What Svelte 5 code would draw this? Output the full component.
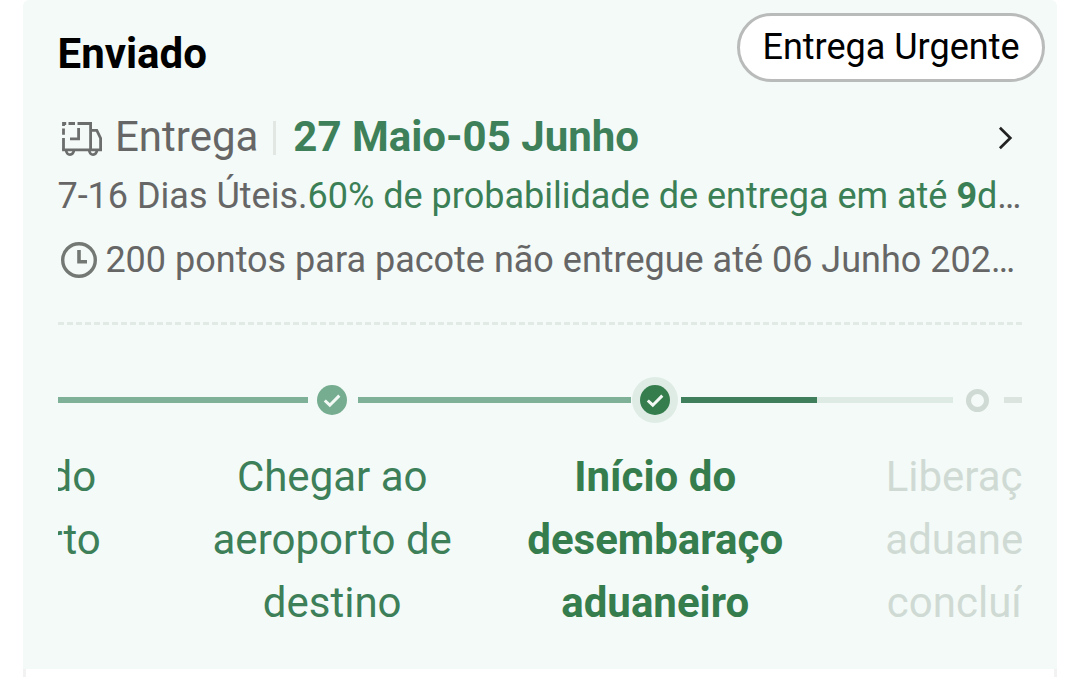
<script>
  const steps = [
    { lines: ['Recebido', 'aeroporto'], state: 'done' },
    { lines: ['Chegar ao', 'aeroporto de', 'destino'], state: 'done' },
    { lines: ['Início do', 'desembaraço', 'aduaneiro'], state: 'current' },
    { lines: ['Liberação', 'aduaneira', 'concluída'], state: 'pending' }
  ];
</script>

{#snippet check()}
  <svg class="check" width="30" height="30" viewBox="0 0 30 30">
    <path d="M7.8 15.5 12.8 20.2 22.3 10.6" fill="none" stroke="#f3faf6" stroke-width="3" />
  </svg>
{/snippet}

<main class="page">
  <section class="card">
    <header class="head">
      <h1>Enviado</h1>
      <button class="pill">Entrega Urgente</button>
    </header>

    <div class="delivery">
      <svg class="truck" width="44" height="38" viewBox="60 120 44 38" fill="none" stroke="#6b6e6c" stroke-width="2.8">
        <path d="M63.5 126V123.5H66.2M68.5 123.5H75M77.5 123.5H90.6V149.8M63.5 128.5V134.8M63.5 138V149.8M100.6 149.8V138.2L96.8 130.4H90.6" />
        <path d="M78.6 128V138.8H70" />
        <path d="M62.1 149.8H102" />
        <path d="M66.2 150.2a3.8 4.5 0 0 0 7.6 0M89.3 150.2a3.8 4.5 0 0 0 7.6 0" />
      </svg>
      <span class="label">Entrega</span>
      <span class="divider"></span>
      <strong>27 Maio-05 Junho</strong>
      <svg class="chevron" width="18" height="26" viewBox="0 0 18 26">
        <path d="M2.9 2.7 13.3 13 2.9 23.3" fill="none" stroke="#222" stroke-width="2.7" />
      </svg>
    </div>

    <p class="estimate">7-16 Dias Úteis.<span>60% de probabilidade de entrega em até <b>9</b>d</span>…</p>

    <div class="points">
      <svg width="38" height="38" viewBox="0 0 38 38" fill="none" stroke="#747875">
        <circle cx="19" cy="19" r="16.3" stroke-width="3.4" />
        <path d="M19 9V20.8H27" stroke-width="3.6" />
      </svg>
      <p>200 pontos para pacote não entregue até 06 Junho 202…</p>
    </div>

    <div class="dashes"></div>

    <div class="track">
      <i class="bar first"></i>
      <span class="node">{@render check()}</span>
      <i class="bar second"></i>
      <span class="node active"><span class="halo">{@render check()}</span></span>
      <i class="bar strong"></i>
      <i class="bar faint"></i>
      <span class="node open"><span class="ring"></span></span>
      <i class="bar tail"></i>
    </div>

    <div class="viewport">
      <div class="steps">
        {#each steps as step}
          <div class="step {step.state}">
            {#each step.lines as line}<div>{line}</div>{/each}
          </div>
        {/each}
      </div>
    </div>
  </section>
  <section class="below"></section>
</main>

<style>
  :global(body) { margin: 0; background: #fff; }
  .page {
    width: 1080px;
    height: 677px;
    overflow: hidden;
    box-sizing: border-box;
    padding: 0 23px;
    background: #fff;
    font-family: Roboto, sans-serif;
    color: #666;
  }
  .card {
    height: 669px;
    box-sizing: border-box;
    padding: 0 35px;
    background: #f4faf7;
    border-radius: 6px 6px 0 0;
  }
  .below {
    height: 8px;
    box-sizing: border-box;
    border: solid #f2f2f2;
    border-width: 0 3px;
  }
  h1, p { margin: 0; }
  .head {
    height: 112px;
    display: flex;
    justify-content: space-between;
    align-items: flex-start;
    margin-right: -23px;
  }
  h1 {
    padding-top: 29px;
    margin-left: -0.5px;
    font-size: 42px;
    line-height: 50px;
    font-weight: 700;
    color: #000;
  }
  .pill {
    width: 308px;
    height: 69px;
    margin: 13px 0 0;
    padding: 0 0 2px;
    border: 3px solid #b9bbba;
    border-radius: 35px;
    background: #fff;
    color: #000;
    font: 400 36px/42px Roboto, sans-serif;
    white-space: nowrap;
  }
  .delivery {
    height: 50px;
    display: flex;
    align-items: center;
    font-size: 42px;
    line-height: 50px;
  }
  .truck { margin: 4px 11px 0 2px; }
  .divider {
    width: 3px;
    height: 34px;
    margin: 2px 17px 0 15px;
    background: #e2e7e4;
  }
  .delivery strong { color: #3d8059; font-weight: 700; }
  .chevron { margin: 2px 7px 0 auto; }
  .estimate {
    height: 42px;
    margin: 13px 0 0 -0.6px;
    font-size: 36px;
    line-height: 42px;
    white-space: nowrap;
  }
  .estimate span { color: #3b7f56; }
  .points {
    display: flex;
    align-items: center;
    gap: 7.4px;
    height: 42px;
    margin: 22px 0 41px 2px;
    font-size: 36px;
    line-height: 42px;
    white-space: nowrap;
  }
  .dashes {
    height: 3px;
    background: repeating-linear-gradient(90deg, #e2eae6 0 6px, transparent 6px 9.038px);
  }
  .track {
    display: flex;
    align-items: center;
    height: 46px;
    margin-top: 52px;
  }
  .bar { height: 6px; background: #7fb098; }
  .first { width: 250px; }
  .second { width: 273px; }
  .strong { width: 136px; background: #407f5b; }
  .faint { width: 136px; background: #deeae4; }
  .tail { width: 18px; background: #dbe4df; }
  .node {
    width: 50px;
    height: 46px;
    box-sizing: border-box;
    display: flex;
    align-items: center;
    justify-content: center;
    padding-right: 2px;
  }
  .check { display: block; border-radius: 50%; background: #76ad91; }
  .halo {
    display: flex;
    padding: 8px;
    border-radius: 50%;
    background: #deece5;
  }
  .halo .check { background: #367d4e; }
  .open { width: 51px; }
  .ring {
    width: 23px;
    height: 23px;
    box-sizing: border-box;
    border: 5px solid #d0dad4;
    border-radius: 50%;
  }
  .viewport { overflow: hidden; margin-top: 22px; }
  .steps { display: flex; width: 1292px; margin-left: -210.3px; }
  .step {
    width: 323px;
    text-align: center;
    font-size: 42px;
    line-height: 63px;
    color: #3c7f58;
    white-space: nowrap;
  }
  .current { font-weight: 700; color: #367d4e; }
  .pending { margin-left: -0.7px; color: #d0dad4; }
</style>
